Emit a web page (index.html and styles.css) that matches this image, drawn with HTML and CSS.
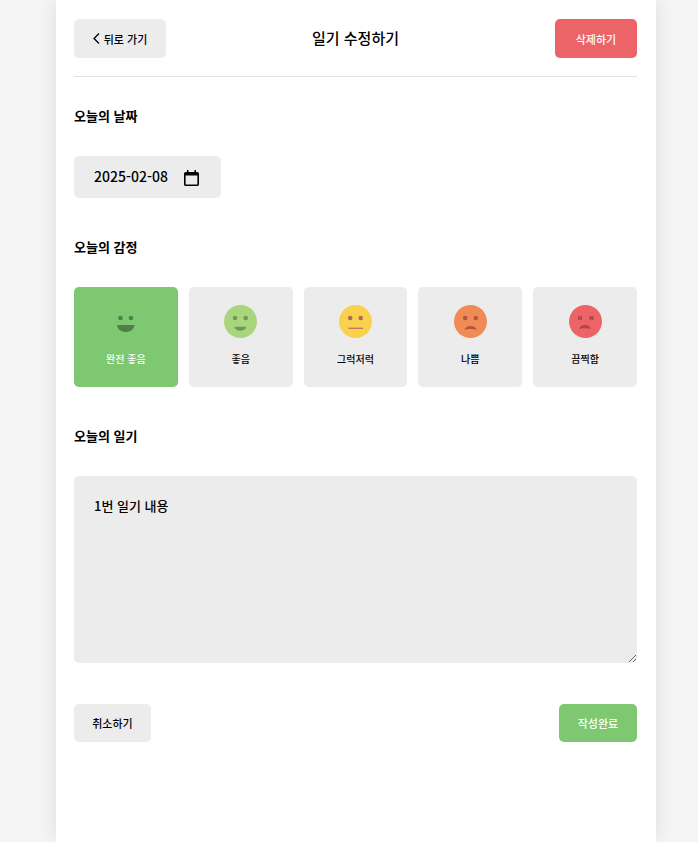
FILE: index.html
```html
<!DOCTYPE html>
<html lang="ko">
<head>
    <meta charset="UTF-8">
    <title>일기 수정하기</title>
    <link rel="stylesheet" href="styles.css">
</head>
<body>
    <div class="page">
        <div class="header">
            <button class="btn back-btn">
                <svg class="chevron" viewBox="0 0 7 11"><path d="M6 0.5 L1 5.5 L6 10.5" fill="none" stroke="#000" stroke-width="1.3"/></svg>
                뒤로 가기
            </button>
            <h1 class="page-title">일기 수정하기</h1>
            <button class="btn delete-btn">삭제하기</button>
        </div>

        <div class="section">
            <h2 class="section-title">오늘의 날짜</h2>
            <div class="date-input">
                <span class="date-value">2025-02-08</span>
                <svg class="calendar" viewBox="0 0 15 16">
                    <path d="M3 0 H4.5 V2 H10.5 V0 H12 V2 H13.2 C14.2 2 15 2.8 15 3.8 V14.2 C15 15.2 14.2 16 13.2 16 H1.8 C0.8 16 0 15.2 0 14.2 V3.8 C0 2.8 0.8 2 1.8 2 H3 Z M1.6 5.5 V14.4 H13.4 V5.5 Z" fill="#000" fill-rule="evenodd"/>
                </svg>
            </div>
        </div>

        <div class="section">
            <h2 class="section-title">오늘의 감정</h2>
            <div class="emotions">
                <div class="emotion selected">
                    <svg class="face" viewBox="0 0 33 33">
                        <circle cx="16.5" cy="16.5" r="16.5" fill="#7dc870"/>
                        <circle cx="11.5" cy="13" r="2.3" fill="#4f8049"/>
                        <circle cx="22" cy="13" r="2.3" fill="#4f8049"/>
                        <path d="M8 20 H25.5 C25 24.5 21 27 16.75 27 C12.5 27 8.5 24.5 8 20 Z" fill="#4f8049"/>
                    </svg>
                    <span class="emotion-label">완전 좋음</span>
                </div>
                <div class="emotion">
                    <svg class="face" viewBox="0 0 33 33">
                        <circle cx="16.5" cy="16.5" r="16.5" fill="#a9d67c"/>
                        <circle cx="11" cy="13" r="2.3" fill="#6d9a55"/>
                        <circle cx="21.7" cy="13" r="2.3" fill="#6d9a55"/>
                        <path d="M10.3 21.7 H22.3 C21.3 24.7 19 25.7 16.3 25.7 C13.6 25.7 11.3 24.7 10.3 21.7 Z" fill="#6d9a55"/>
                    </svg>
                    <span class="emotion-label">좋음</span>
                </div>
                <div class="emotion">
                    <svg class="face" viewBox="0 0 33 33">
                        <circle cx="16.5" cy="16.5" r="16.5" fill="#f8d24d"/>
                        <circle cx="11.2" cy="13" r="2.3" fill="#b5694f"/>
                        <circle cx="21.8" cy="13" r="2.3" fill="#b5694f"/>
                        <rect x="9.3" y="22.6" width="14.7" height="1.4" fill="#c4775a"/>
                    </svg>
                    <span class="emotion-label">그럭저럭</span>
                </div>
                <div class="emotion">
                    <svg class="face" viewBox="0 0 33 33">
                        <circle cx="16.5" cy="16.5" r="16.5" fill="#f08b55"/>
                        <circle cx="11.2" cy="13" r="2.3" fill="#b2543f"/>
                        <circle cx="21.8" cy="13" r="2.3" fill="#b2543f"/>
                        <path d="M10.3 25 C11 22.5 13.5 21 16.5 21 C19.5 21 22 22.5 22.7 25 C20 23.7 13 23.7 10.3 25 Z" fill="#b2543f"/>
                    </svg>
                    <span class="emotion-label">나쁨</span>
                </div>
                <div class="emotion">
                    <svg class="face" viewBox="0 0 33 33">
                        <circle cx="16.5" cy="16.5" r="16.5" fill="#ec6468"/>
                        <path d="M9 10.5 L11 11.7 L13 10.5 V15.5 L11 14.3 L9 15.5 Z M20.5 10.5 L22.5 11.7 L24.5 10.5 V15.5 L22.5 14.3 L20.5 15.5 Z" fill="#b04547"/>
                        <path d="M10 24.3 C10.7 21.5 13 20 16 20 C19 20 21.3 21.5 22 24.3 C19.5 23 12.5 23 10 24.3 Z" fill="#b04547"/>
                    </svg>
                    <span class="emotion-label">끔찍함</span>
                </div>
            </div>
        </div>

        <div class="section">
            <h2 class="section-title">오늘의 일기</h2>
            <textarea class="diary-text">1번 일기 내용</textarea>
        </div>

        <div class="footer">
            <button class="btn cancel-btn">취소하기</button>
            <button class="btn submit-btn">작성완료</button>
        </div>
    </div>
</body>
</html>
```

FILE: styles.css
```css
body {
    margin: 0;
    background: #f5f5f5;
    font-family: "Noto Sans CJK KR", "Noto Sans", sans-serif;
    color: #000;
    overflow: hidden;
}
.page {
    width: 563px;
    height: 823px;
    margin-left: 56px;
    padding: 19px 19px 0 18px;
    background: #fff;
    box-shadow: 0 0 20px rgba(0, 0, 0, 0.1);
}
.header {
    display: grid;
    grid-template-columns: 1fr auto 1fr;
    align-items: center;
    padding-bottom: 18px;
    margin-bottom: 29px;
    border-bottom: 1px solid #e2e2e2;
}
.page-title {
    margin: 0 0 2px;
    font-size: 15px;
    font-weight: 500;
}
.btn {
    height: 39px;
    padding: 0;
    border: none;
    border-radius: 5px;
    background: #ececec;
    color: #000;
    font-family: inherit;
    font-size: 11px;
    font-weight: 500;
}
.back-btn {
    display: flex;
    align-items: center;
    justify-content: center;
    gap: 4px;
    width: 92px;
}
.chevron {
    width: 7px;
    height: 11px;
}
.delete-btn {
    justify-self: end;
    width: 82px;
    background: #ec6468;
    color: #fff;
}
.section {
    margin-bottom: 39px;
}
.section-title {
    margin: 0 0 30px;
    font-size: 13px;
    line-height: 20px;
    font-weight: 700;
}
.date-input {
    display: flex;
    align-items: center;
    justify-content: space-between;
    box-sizing: border-box;
    width: 147px;
    height: 42px;
    padding: 0 22px 0 20px;
    border-radius: 5px;
    background: #ececec;
    font-size: 14px;
    font-weight: 500;
}
.date-value {
    margin-bottom: 3px;
}
.calendar {
    width: 15px;
    height: 16px;
    margin-top: 1px;
}
.emotions {
    display: grid;
    grid-template-columns: repeat(5, 1fr);
    gap: 11px;
}
.emotion {
    display: flex;
    flex-direction: column;
    align-items: center;
    height: 100px;
    padding-top: 18px;
    box-sizing: border-box;
    border-radius: 5px;
    background: #ececec;
}
.emotion.selected {
    background: #7dc870;
    color: #fff;
}
.face {
    width: 33px;
    height: 33px;
}
.emotion-label {
    margin-top: 13px;
    font-size: 10px;
    font-weight: 500;
    line-height: 16px;
}
.diary-text {
    display: block;
    box-sizing: border-box;
    width: 100%;
    height: 187px;
    padding: 20px;
    border: none;
    border-radius: 5px;
    background: #ececec;
    font-family: inherit;
    font-size: 13px;
    font-weight: 500;
}
.footer {
    display: flex;
    justify-content: space-between;
    margin-top: 41px;
}
.cancel-btn {
    width: 77px;
    height: 38px;
}
.submit-btn {
    width: 78px;
    height: 38px;
    background: #7dc870;
    color: #fff;
}
```
